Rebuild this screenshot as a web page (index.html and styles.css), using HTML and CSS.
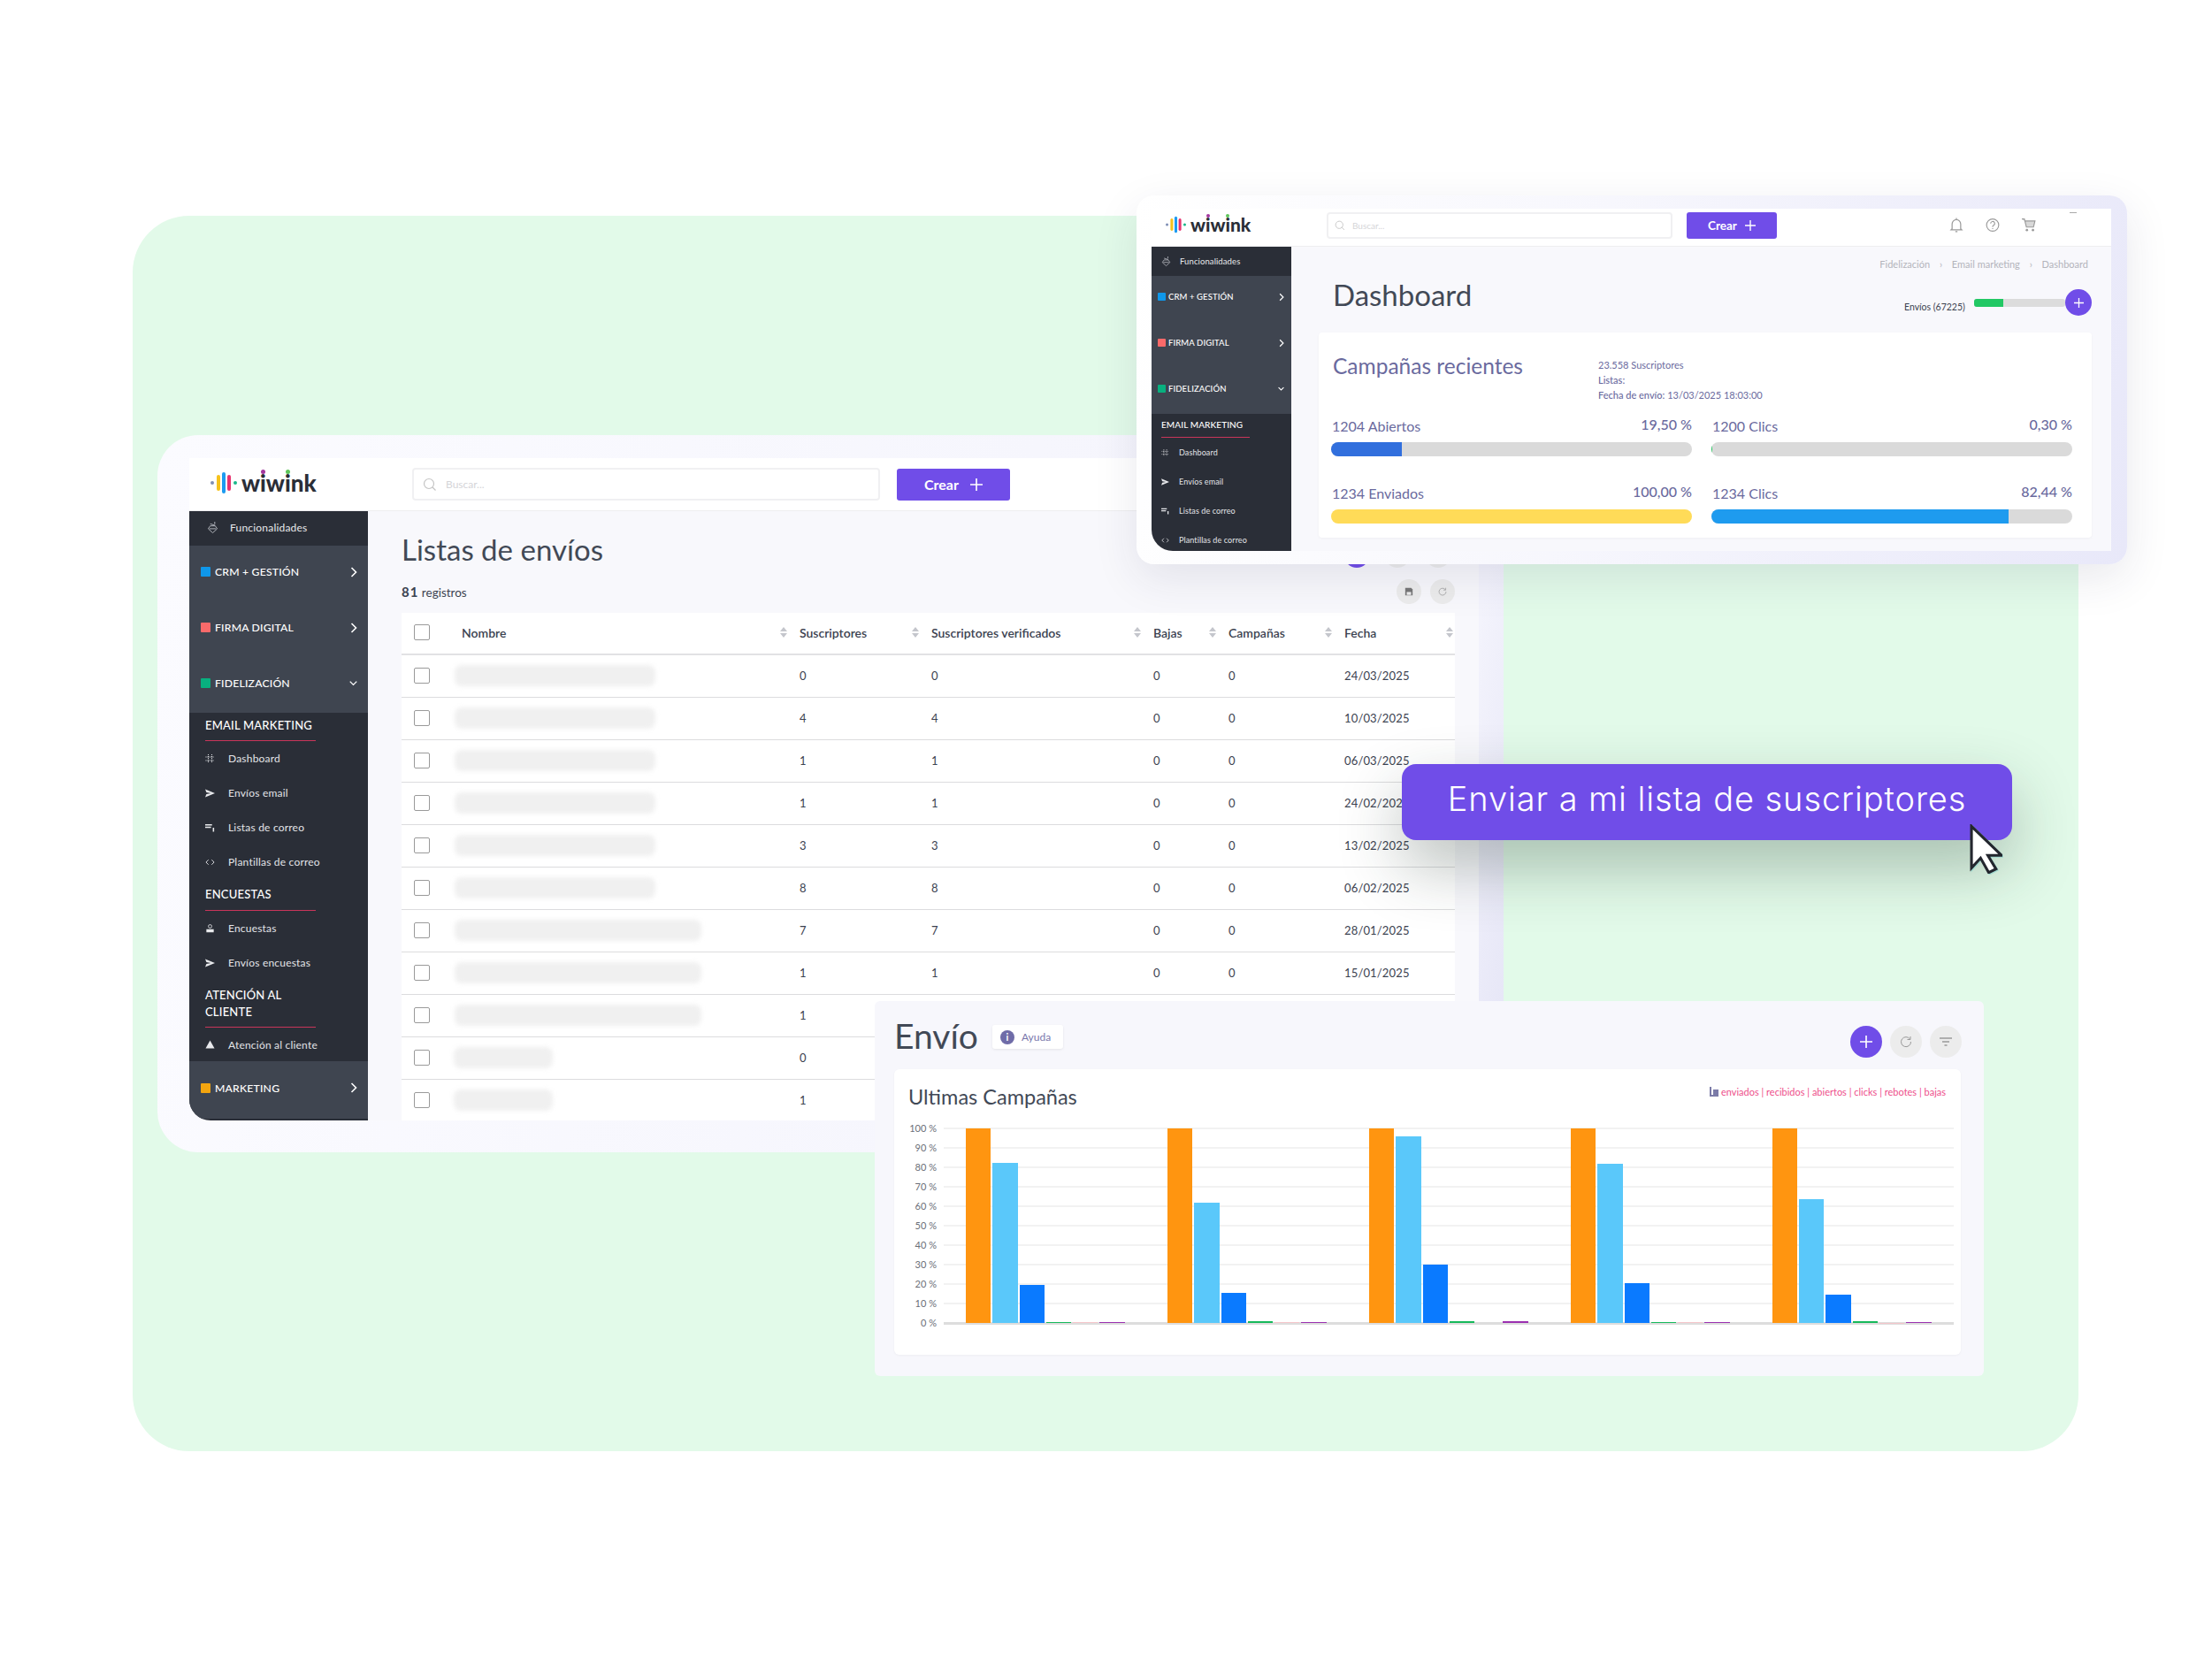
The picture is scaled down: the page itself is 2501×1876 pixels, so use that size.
FILE: index.html
```html
<!DOCTYPE html>
<html lang="es">
<head>
    <meta charset="UTF-8">
    <title>Wiwink</title>
    <link rel="stylesheet" href="styles.css">
</head>
<body>
    <svg class="sprite" width="0" height="0">
        <symbol id="i-bars" viewBox="0 0 30 24">
            <circle cx="2" cy="12" r="2" fill="#7f8fb5"/>
            <rect x="7" y="3" width="4" height="18" rx="2" fill="#f6c21c"/>
            <rect x="13" y="0" width="4" height="24" rx="2" fill="#1d9bf0"/>
            <rect x="19" y="3" width="4" height="18" rx="2" fill="#e8326f"/>
            <circle cx="28" cy="12" r="2" fill="#19b789"/>
        </symbol>
        <symbol id="i-search" viewBox="0 0 16 16">
            <circle cx="7" cy="7" r="5.5" fill="none" stroke="#c4c4c4" stroke-width="1.2"/>
            <path d="M11 11l3.5 3.5" stroke="#c4c4c4" stroke-width="1.2"/>
        </symbol>
        <symbol id="i-plus" viewBox="0 0 12 12">
            <path d="M6 0v12M0 6h12" stroke="currentColor" stroke-width="1.4" fill="none"/>
        </symbol>
        <symbol id="i-right" viewBox="0 0 8 12">
            <path d="M1.5 1l5 5-5 5" stroke="currentColor" stroke-width="1.6" fill="none"/>
        </symbol>
        <symbol id="i-down" viewBox="0 0 12 8">
            <path d="M1 1.5l5 5 5-5" stroke="currentColor" stroke-width="1.8" fill="none"/>
        </symbol>
        <symbol id="i-func" viewBox="0 0 14 16">
            <path d="M7 14.5L1.5 9.5 4 6h6l2.500 3.500zM3 9.5h8M4 3.5l6 2M9.500 1v3" stroke="currentColor" fill="none"/>
        </symbol>
        <symbol id="i-dash" viewBox="0 0 10 10">
            <path d="M3 0v10M7 0v10M0 3h10M0 7h10" stroke="currentColor" stroke-dasharray="1 1" fill="none"/>
        </symbol>
        <symbol id="i-send" viewBox="0 0 12 10">
            <path d="M0 0l12 5-12 5 1.500-4L7 5 1.500 4z" fill="currentColor"/>
        </symbol>
        <symbol id="i-list" viewBox="0 0 10 8">
            <path d="M0 1h7M0 3.500h6M8.500 4v4" stroke="currentColor" stroke-width="1.4" fill="none"/>
        </symbol>
        <symbol id="i-code" viewBox="0 0 12 8">
            <path d="M4 1L1 4l3 3M8 1l3 3-3 3" stroke="currentColor" fill="none"/>
        </symbol>
        <symbol id="i-poll" viewBox="0 0 12 12">
            <circle cx="6" cy="3" r="2.300" fill="none" stroke="currentColor"/>
            <path d="M1 7h10v4H1z" fill="currentColor"/>
        </symbol>
        <symbol id="i-help" viewBox="0 0 12 10">
            <path d="M6 0l5.500 10H.5z" fill="currentColor"/>
        </symbol>
        <symbol id="i-sort" viewBox="0 0 8 12">
            <path d="M4 0l4 5H0zM4 12l4-5H0z" fill="#c4c6cc"/>
        </symbol>
        <symbol id="i-save" viewBox="0 0 12 12">
            <path d="M1 1h8l2 2v8H1z" fill="#777"/>
            <rect x="3" y="6.500" width="6" height="4" fill="#eee"/>
        </symbol>
        <symbol id="i-refresh" viewBox="0 0 14 14">
            <path d="M11.500 4A5.500 5.500 0 1 0 12.500 7M12 1v3.500H8.500" stroke="currentColor" fill="none"/>
        </symbol>
        <symbol id="i-filter" viewBox="0 0 14 10">
            <path d="M0 1h14M3 5h8M5.500 9h3" stroke="currentColor" stroke-width="1.500" fill="none"/>
        </symbol>
        <symbol id="i-bell" viewBox="0 0 12 14">
            <path d="M2 10.500V6a4 4 0 0 1 8 0v4.500l1 1H1zM5 13h2M6 .500v1.500" stroke="#9a9a9a" fill="none"/>
        </symbol>
        <symbol id="i-quest" viewBox="0 0 14 14">
            <circle cx="7" cy="7" r="6" stroke="#9a9a9a" fill="none"/>
            <path d="M5 5.500a2 2 0 1 1 2.800 1.800C7 7.700 7 8 7 9M7 10v1" stroke="#9a9a9a" fill="none"/>
        </symbol>
        <symbol id="i-cart" viewBox="0 0 14 14">
            <path d="M0 1h2.500l2 8h7L13 3H3" stroke="#9a9a9a" fill="#d8d8d8"/>
            <circle cx="5" cy="12" r="1.200" fill="#9a9a9a"/>
            <circle cx="11" cy="12" r="1.200" fill="#9a9a9a"/>
        </symbol>
    </svg>

    <main class="stage">
        <div class="green-panel"></div>

        <!-- ventana listas de envios -->
        <section class="card-list">
            <div class="window">
                <header class="topbar">
                    <div class="logo">
                        <svg class="logo-mark"><use href="#i-bars"/></svg>
                        <span class="logo-text">w<span class="i-purple">i</span>w<span class="i-green">i</span>nk</span>
                    </div>
                    <div class="search">
                        <svg class="search-icon"><use href="#i-search"/></svg>
                        <span>Buscar...</span>
                    </div>
                    <button class="btn-crear">Crear <svg><use href="#i-plus"/></svg></button>
                </header>
                <div class="window-body">
                    <nav class="sidebar">
                        <div class="side-func"><svg class="side-icon"><use href="#i-func"/></svg>Funcionalidades</div>
                        <div class="side-groups">
                            <div class="side-group"><span class="square blue"></span>CRM + GESTIÓN<svg class="chev"><use href="#i-right"/></svg></div>
                            <div class="side-group"><span class="square red"></span>FIRMA DIGITAL<svg class="chev"><use href="#i-right"/></svg></div>
                            <div class="side-group"><span class="square green"></span>FIDELIZACIÓN<svg class="chev-down"><use href="#i-down"/></svg></div>
                        </div>
                        <div class="side-menu">
                            <div class="side-title">EMAIL MARKETING</div>
                            <div class="side-item"><svg class="item-icon"><use href="#i-dash"/></svg>Dashboard</div>
                            <div class="side-item"><svg class="item-icon"><use href="#i-send"/></svg>Envíos email</div>
                            <div class="side-item"><svg class="item-icon"><use href="#i-list"/></svg>Listas de correo</div>
                            <div class="side-item"><svg class="item-icon"><use href="#i-code"/></svg>Plantillas de correo</div>
                            <div class="side-title">ENCUESTAS</div>
                            <div class="side-item"><svg class="item-icon"><use href="#i-poll"/></svg>Encuestas</div>
                            <div class="side-item"><svg class="item-icon"><use href="#i-send"/></svg>Envíos encuestas</div>
                            <div class="side-title two-lines">ATENCIÓN AL CLIENTE</div>
                            <div class="side-item short"><svg class="item-icon"><use href="#i-help"/></svg>Atención al cliente</div>
                        </div>
                        <div class="side-group side-last"><span class="square orange"></span>MARKETING<svg class="chev"><use href="#i-right"/></svg></div>
                    </nav>
                    <div class="list-main">
                        <div class="list-head">
                            <h1 class="list-title">Listas de envíos</h1>
                            <div class="list-actions">
                                <span class="circle purple"></span>
                                <span class="circle"></span>
                                <span class="circle"></span>
                            </div>
                        </div>
                        <div class="list-meta">
                            <p><b>81</b> registros</p>
                            <div class="meta-actions">
                                <span class="circle"><svg class="mini"><use href="#i-save"/></svg></span>
                                <span class="circle"><svg class="mini gray"><use href="#i-refresh"/></svg></span>
                            </div>
                        </div>
                        <table class="list-table">
                            <colgroup>
                                <col class="c-check"><col class="c-name"><col class="c-subs"><col class="c-verif"><col class="c-bajas"><col class="c-camp"><col class="c-date">
                            </colgroup>
                            <thead>
                                <tr>
                                    <th><span class="check"></span></th>
                                    <th><div class="th-in">Nombre<svg class="sort"><use href="#i-sort"/></svg></div></th>
                                    <th><div class="th-in">Suscriptores<svg class="sort"><use href="#i-sort"/></svg></div></th>
                                    <th><div class="th-in">Suscriptores verificados<svg class="sort"><use href="#i-sort"/></svg></div></th>
                                    <th><div class="th-in">Bajas<svg class="sort"><use href="#i-sort"/></svg></div></th>
                                    <th><div class="th-in">Campañas<svg class="sort"><use href="#i-sort"/></svg></div></th>
                                    <th><div class="th-in last">Fecha<svg class="sort"><use href="#i-sort"/></svg></div></th>
                                </tr>
                            </thead>
                            <tbody>
                                <tr><td><span class="check"></span></td><td><div class="blur"></div></td><td>0</td><td>0</td><td>0</td><td>0</td><td>24/03/2025</td></tr>
                                <tr><td><span class="check"></span></td><td><div class="blur"></div></td><td>4</td><td>4</td><td>0</td><td>0</td><td>10/03/2025</td></tr>
                                <tr><td><span class="check"></span></td><td><div class="blur"></div></td><td>1</td><td>1</td><td>0</td><td>0</td><td>06/03/2025</td></tr>
                                <tr><td><span class="check"></span></td><td><div class="blur"></div></td><td>1</td><td>1</td><td>0</td><td>0</td><td>24/02/2025</td></tr>
                                <tr><td><span class="check"></span></td><td><div class="blur"></div></td><td>3</td><td>3</td><td>0</td><td>0</td><td>13/02/2025</td></tr>
                                <tr><td><span class="check"></span></td><td><div class="blur"></div></td><td>8</td><td>8</td><td>0</td><td>0</td><td>06/02/2025</td></tr>
                                <tr><td><span class="check"></span></td><td><div class="blur wide"></div></td><td>7</td><td>7</td><td>0</td><td>0</td><td>28/01/2025</td></tr>
                                <tr><td><span class="check"></span></td><td><div class="blur wide"></div></td><td>1</td><td>1</td><td>0</td><td>0</td><td>15/01/2025</td></tr>
                                <tr><td><span class="check"></span></td><td><div class="blur wide"></div></td><td>1</td><td></td><td></td><td></td><td></td></tr>
                                <tr><td><span class="check"></span></td><td><div class="blur small"></div></td><td>0</td><td></td><td></td><td></td><td></td></tr>
                                <tr><td><span class="check"></span></td><td><div class="blur small"></div></td><td>1</td><td></td><td></td><td></td><td></td></tr>
                            </tbody>
                        </table>
                    </div>
                </div>
            </div>
        </section>

        <!-- ventana dashboard -->
        <section class="card-dash">
            <div class="window mini-window">
                <header class="topbar">
                    <div class="logo">
                        <svg class="logo-mark"><use href="#i-bars"/></svg>
                        <span class="logo-text">w<span class="i-purple">i</span>w<span class="i-green">i</span>nk</span>
                    </div>
                    <div class="search">
                        <svg class="search-icon"><use href="#i-search"/></svg>
                        <span>Buscar...</span>
                    </div>
                    <button class="btn-crear">Crear <svg><use href="#i-plus"/></svg></button>
                    <div class="top-icons">
                        <svg><use href="#i-bell"/></svg>
                        <svg><use href="#i-quest"/></svg>
                        <svg><use href="#i-cart"/></svg>
                    </div>
                    <span class="avatar-edge"></span>
                </header>
                <div class="window-body">
                    <nav class="sidebar">
                        <div class="side-func"><svg class="side-icon"><use href="#i-func"/></svg>Funcionalidades</div>
                        <div class="side-groups">
                            <div class="side-group"><span class="square blue"></span>CRM + GESTIÓN<svg class="chev"><use href="#i-right"/></svg></div>
                            <div class="side-group"><span class="square red"></span>FIRMA DIGITAL<svg class="chev"><use href="#i-right"/></svg></div>
                            <div class="side-group"><span class="square green"></span>FIDELIZACIÓN<svg class="chev-down"><use href="#i-down"/></svg></div>
                        </div>
                        <div class="side-menu">
                            <div class="side-title">EMAIL MARKETING</div>
                            <div class="side-item"><svg class="item-icon"><use href="#i-dash"/></svg>Dashboard</div>
                            <div class="side-item"><svg class="item-icon"><use href="#i-send"/></svg>Envíos email</div>
                            <div class="side-item"><svg class="item-icon"><use href="#i-list"/></svg>Listas de correo</div>
                            <div class="side-item"><svg class="item-icon"><use href="#i-code"/></svg>Plantillas de correo</div>
                        </div>
                    </nav>
                    <div class="dash-main">
                        <div class="crumbs">Fidelización <i>›</i> Email marketing <i>›</i> Dashboard</div>
                        <div class="dash-head">
                            <h1 class="dash-title">Dashboard</h1>
                            <div class="usage">
                                <span class="usage-label">Envíos (67225)</span>
                                <div class="usage-bar"><div class="usage-fill"></div></div>
                                <span class="round-plus"><svg><use href="#i-plus"/></svg></span>
                            </div>
                        </div>
                        <div class="dash-card">
                            <div class="dash-card-head">
                                <h2>Campañas recientes</h2>
                                <div class="dash-info">
                                    <p>23.558 Suscriptores</p>
                                    <p><b>Listas:</b></p>
                                    <p><b>Fecha de envío:</b> 13/03/2025 18:03:00</p>
                                </div>
                            </div>
                            <div class="stats">
                                <div class="stat">
                                    <div class="stat-text"><span>1204 Abiertos</span><b>19,50 %</b></div>
                                    <div class="stat-bar"><div class="stat-fill" style="width: 19.5%; background: #316fdd"></div></div>
                                </div>
                                <div class="stat">
                                    <div class="stat-text"><span>1200 Clics</span><b>0,30 %</b></div>
                                    <div class="stat-bar"><div class="stat-fill" style="width: 0.3%; background: #22c55e"></div></div>
                                </div>
                                <div class="stat">
                                    <div class="stat-text"><span>1234 Enviados</span><b>100,00 %</b></div>
                                    <div class="stat-bar"><div class="stat-fill" style="width: 100%; background: #ffdb58"></div></div>
                                </div>
                                <div class="stat">
                                    <div class="stat-text"><span>1234 Clics</span><b>82,44 %</b></div>
                                    <div class="stat-bar"><div class="stat-fill" style="width: 82.44%; background: #1e9bef"></div></div>
                                </div>
                            </div>
                        </div>
                    </div>
                </div>
            </div>
        </section>

        <!-- panel envio -->
        <section class="panel-envio">
            <div class="envio-head">
                <h1 class="envio-title">Envío</h1>
                <div class="chip"><span class="chip-i">i</span>Ayuda</div>
                <div class="envio-actions">
                    <span class="big-circle purple"><svg><use href="#i-plus"/></svg></span>
                    <span class="big-circle"><svg><use href="#i-refresh"/></svg></span>
                    <span class="big-circle"><svg class="f"><use href="#i-filter"/></svg></span>
                </div>
            </div>
            <div class="chart-card">
                <div class="chart-head">
                    <h2>Ultimas Campañas</h2>
                    <div class="legend">
                        <span class="legend-icon"></span>
                        enviados | recibidos | abiertos | clicks | rebotes | bajas
                    </div>
                </div>
                <div class="plot">
                    <div class="grid-lines">
                        <div class="grid-row"><span>100 %</span><i></i></div>
                        <div class="grid-row"><span>90 %</span><i></i></div>
                        <div class="grid-row"><span>80 %</span><i></i></div>
                        <div class="grid-row"><span>70 %</span><i></i></div>
                        <div class="grid-row"><span>60 %</span><i></i></div>
                        <div class="grid-row"><span>50 %</span><i></i></div>
                        <div class="grid-row"><span>40 %</span><i></i></div>
                        <div class="grid-row"><span>30 %</span><i></i></div>
                        <div class="grid-row"><span>20 %</span><i></i></div>
                        <div class="grid-row"><span>10 %</span><i></i></div>
                        <div class="grid-row zero"><span>0 %</span><i></i></div>
                    </div>
                    <div class="bars">
                        <div class="bar-group">
                            <div class="bar b1" style="height: 100%"></div><div class="bar b2" style="height: 82.5%"></div><div class="bar b3" style="height: 19.5%"></div><div class="bar b4" style="height: 0.4%"></div><div class="bar b5" style="height: 0.4%"></div><div class="bar b6" style="height: 0.4%"></div>
                        </div>
                        <div class="bar-group">
                            <div class="bar b1" style="height: 100%"></div><div class="bar b2" style="height: 62%"></div><div class="bar b3" style="height: 15.5%"></div><div class="bar b4" style="height: 0.9%"></div><div class="bar b5" style="height: 0.3%"></div><div class="bar b6" style="height: 0.3%"></div>
                        </div>
                        <div class="bar-group">
                            <div class="bar b1" style="height: 100%"></div><div class="bar b2" style="height: 96%"></div><div class="bar b3" style="height: 30%"></div><div class="bar b4" style="height: 1%"></div><div class="bar b5" style="height: 0"></div><div class="bar b6" style="height: 0.9%"></div>
                        </div>
                        <div class="bar-group">
                            <div class="bar b1" style="height: 100%"></div><div class="bar b2" style="height: 82%"></div><div class="bar b3" style="height: 20.5%"></div><div class="bar b4" style="height: 0.6%"></div><div class="bar b5" style="height: 0.3%"></div><div class="bar b6" style="height: 0.5%"></div>
                        </div>
                        <div class="bar-group">
                            <div class="bar b1" style="height: 100%"></div><div class="bar b2" style="height: 63.5%"></div><div class="bar b3" style="height: 14.7%"></div><div class="bar b4" style="height: 0.8%"></div><div class="bar b5" style="height: 0.1%"></div><div class="bar b6" style="height: 0.5%"></div>
                        </div>
                    </div>
                </div>
            </div>
        </section>

        <button class="btn-enviar">Enviar a mi lista de suscriptores</button>

        <svg class="cursor" viewBox="0 0 36 54">
            <path d="M2 2v46l10-11 9 16 8-4-9-15h15z" fill="#fff" stroke="#23262e" stroke-width="3" stroke-linejoin="miter"/>
        </svg>
    </main>
</body>
</html>
```

FILE: styles.css
```css
* {
    box-sizing: border-box;
}

body {
    margin: 0;
    background-color: #fff;
    font-family: Lato, "Open Sans", sans-serif;
    color: #3b4250;
}

h1, h2, p {
    margin: 0;
    font-weight: 400;
}

.sprite {
    position: absolute;
}

/* free canvas: the windows are placed on it */
.stage {
    position: relative;
    width: 2501px;
    height: 1876px;
    overflow: hidden;
}

.green-panel {
    position: absolute;
    left: 150px;
    top: 244px;
    width: 2200px;
    height: 1397px;
    background-color: #e2fae9;
    border-radius: 64px;
}

.card-list {
    position: absolute;
    left: 178px;
    top: 492px;
    width: 1522px;
    height: 811px;
    padding: 26px 28px 36px 36px;
    border-radius: 46px;
    background: linear-gradient(100deg, #fbfbff 0%, #f6f6fd 60%, #f3f3fc 92%, #e7e7f7 98.1%);
}

.card-dash {
    position: absolute;
    left: 1285px;
    top: 221px;
    width: 1120px;
    height: 417px;
    padding: 15px 18px 15px 17px;
    border-radius: 20px;
    background: linear-gradient(100deg, #fff 0%, #f7f7fd 45%, #e8e8f9 100%);
    box-shadow: 0 16px 50px rgba(40, 40, 80, 0.1);
}

.window {
    height: 100%;
    display: flex;
    flex-direction: column;
    background-color: #f8f8fc;
    border-bottom-left-radius: 24px;
    overflow: hidden;
}

.window-body {
    flex: 1;
    display: flex;
    min-height: 0;
}

/* top bar */
.topbar {
    height: 60px;
    flex-shrink: 0;
    display: flex;
    align-items: center;
    padding-left: 24px;
    background-color: #fff;
    border-bottom: 1px solid #eeeef0;
}

.logo {
    width: 228px;
    display: flex;
    align-items: center;
    gap: 5px;
    margin-top: -3px;
}

.logo-mark {
    width: 30px;
    height: 24px;
}

.logo-text {
    font-size: 26px;
    font-weight: 900;
    line-height: 24px;
    color: #2a2e37;
}

.i-purple,
.i-green {
    position: relative;
    color: #2a2e37;
}

.i-purple::before,
.i-green::before {
    content: "";
    position: absolute;
    left: 1px;
    top: 1px;
    width: 5px;
    height: 5px;
    border-radius: 50%;
    background-color: #a3379e;
}

.i-green::before {
    background-color: #5fc65a;
}

.search {
    width: 529px;
    height: 37px;
    display: flex;
    align-items: center;
    gap: 10px;
    padding-left: 10px;
    border: 2px solid #f0f0f2;
    border-radius: 4px;
    font-size: 12px;
    color: #d5d5d8;
}

.search-icon {
    width: 16px;
    height: 16px;
}

.btn-crear {
    width: 128px;
    height: 36px;
    margin-left: 19px;
    display: flex;
    align-items: center;
    justify-content: center;
    gap: 13px;
    border: none;
    border-radius: 3px;
    background-color: #704de8;
    color: #fff;
    font-family: inherit;
    font-size: 16px;
    font-weight: 700;
}

.btn-crear svg {
    width: 14px;
    height: 14px;
}

/* sidebar */
.sidebar {
    width: 202px;
    flex-shrink: 0;
    display: flex;
    flex-direction: column;
    background-color: #2a2e37;
    color: #e8e9ec;
    font-size: 12px;
    letter-spacing: 0.2px;
}

.side-func {
    height: 39px;
    flex-shrink: 0;
    display: flex;
    align-items: center;
    padding: 0 0 2px 20px;
    gap: 13px;
}

.side-icon {
    width: 13px;
    height: 15px;
    color: #b9bcc2;
}

.side-groups {
    height: 188px;
    flex-shrink: 0;
    background-color: #3f4550;
}

.side-group {
    height: 63px;
    flex-shrink: 0;
    padding: 0 12px 4px 13px;
    display: flex;
    align-items: center;
    background-color: #3f4550;
    font-size: 12.2px;
    font-weight: 500;
    color: #fff;
}

.side-last {
    height: 65px;
    padding-bottom: 5px;
}

.square {
    width: 11px;
    height: 11px;
    margin-right: 5px;
    border-radius: 1px;
}

.blue { background-color: #0f97ea; }
.red { background-color: #f96a6a; }
.green { background-color: #08b07f; }
.orange { background-color: #f3a50f; }

.chev,
.chev-down {
    margin-left: auto;
    color: #fff;
}

.chev {
    width: 8px;
    height: 12px;
}

.chev-down {
    width: 9px;
    height: 7px;
}

.side-menu {
    flex-shrink: 0;
    padding: 0 0 0 18px;
}

.side-title {
    width: 125px;
    height: 33px;
    display: flex;
    align-items: center;
    padding-bottom: 2px;
    border-bottom: 1px solid #c9355a;
    font-size: 13px;
    font-weight: 500;
    color: #fff;
}

.side-item + .side-title {
    height: 36px;
}

.side-item + .side-title.two-lines {
    height: 54px;
    line-height: 19px;
    padding: 1px 0 0;
}

.side-item {
    height: 39px;
    display: flex;
    align-items: center;
    gap: 15px;
    color: #e3e4e8;
}

.side-item.short {
    height: 38px;
}

.item-icon {
    width: 11px;
    height: 10px;
    flex-shrink: 0;
    color: #e8e9ec;
}

/* list page */
.list-main {
    flex: 1;
    min-width: 0;
    padding: 23px 27px 0 38px;
}

.list-head {
    height: 40px;
    display: flex;
    justify-content: space-between;
    align-items: flex-end;
}

.list-title {
    font-size: 33px;
    line-height: 40px;
    color: #424956;
}

.list-actions {
    display: flex;
    gap: 18px;
    padding-right: 5px;
    margin-bottom: -1px;
}

.circle {
    width: 28px;
    height: 28px;
    display: flex;
    align-items: center;
    justify-content: center;
    border-radius: 50%;
    background-color: #ececec;
}

.circle.purple {
    background-color: #704de8;
}

.list-meta {
    height: 34px;
    margin-top: 11px;
    margin-bottom: 7px;
    display: flex;
    justify-content: space-between;
    align-items: center;
    font-size: 13.5px;
}

.list-meta b {
    font-size: 15px;
    font-weight: 700;
    letter-spacing: 1px;
}

.meta-actions {
    display: flex;
    gap: 10px;
}

.mini {
    width: 10px;
    height: 10px;
}

.mini.gray {
    color: #999;
}

.list-table {
    width: 1191px;
    table-layout: fixed;
    border-collapse: collapse;
    background-color: #fff;
    font-size: 13px;
    letter-spacing: 0.15px;
}

.c-check { width: 68px; }
.c-name { width: 382px; }
.c-subs { width: 149px; }
.c-verif { width: 251px; }
.c-bajas { width: 85px; }
.c-camp { width: 131px; }
.c-date { width: 125px; }

.list-table th {
    height: 47px;
    padding: 0 0 2px;
    text-align: left;
    font-size: 14px;
    font-weight: 600;
    letter-spacing: 0;
    border-bottom: 2px solid #e2e2e4;
}

.list-table td {
    height: 48px;
    padding: 0;
    border-bottom: 1px solid #dcdcde;
}

.list-table th:first-child,
.list-table td:first-child {
    padding-left: 14px;
}

.th-in {
    display: flex;
    align-items: center;
    justify-content: space-between;
    padding-right: 14px;
}

.th-in.last {
    padding-right: 2px;
}

.sort {
    width: 8px;
    height: 12px;
}

.check {
    display: block;
    width: 18px;
    height: 18px;
    background-color: #fff;
    border: 1.5px solid #9a9a9a;
    border-radius: 2px;
}

.blur {
    width: 227px;
    height: 24px;
    margin-left: -8px;
    border-radius: 8px;
    background-color: #f0f0f0;
    filter: blur(2.5px);
}

.blur.wide {
    width: 279px;
}

.blur.small {
    width: 112px;
    margin-left: -9px;
}

/* dashboard window */
.mini-window .topbar {
    height: 43px;
    padding: 0 0 5px 16px;
}

.mini-window .logo {
    width: 182px;
    gap: 5px;
    margin-top: -2px;
}

.mini-window .logo-mark {
    width: 23px;
    height: 20px;
}

.mini-window .logo-text {
    font-size: 21px;
    line-height: 20px;
}

.mini-window .i-purple::before,
.mini-window .i-green::before {
    width: 4px;
    height: 4px;
}

.mini-window .search {
    width: 391px;
    height: 30px;
    padding-left: 7px;
    gap: 8px;
    font-size: 10px;
}

.mini-window .search-icon {
    width: 12px;
    height: 14px;
}

.mini-window .btn-crear {
    width: 102px;
    height: 30px;
    margin-left: 16px;
    gap: 9px;
    font-size: 13.5px;
}

.mini-window .btn-crear svg {
    width: 12px;
    height: 12px;
}

.top-icons {
    display: flex;
    gap: 25px;
    margin-left: 195px;
}

.top-icons svg {
    width: 16px;
    height: 17px;
}

.avatar-edge {
    width: 8px;
    height: 1px;
    margin: 0 0 28px 38px;
    background-color: #aaa;
}

.mini-window .sidebar {
    width: 158px;
    font-size: 9.5px;
    letter-spacing: 0.1px;
}

.mini-window .side-func {
    height: 33px;
    padding: 0 0 0 11px;
    gap: 10px;
}

.mini-window .side-icon {
    width: 11px;
    height: 13px;
}

.mini-window .side-groups {
    height: 156px;
}

.mini-window .side-group {
    height: 52px;
    padding: 0 8px 5px 7px;
    font-size: 9.5px;
}

.mini-window .square {
    width: 9px;
    height: 9px;
    margin-right: 3px;
}

.mini-window .chev {
    width: 6px;
    height: 10px;
}

.mini-window .chev-down {
    width: 7px;
    height: 5px;
}

.mini-window .side-menu {
    padding-left: 11px;
}

.mini-window .side-title {
    width: 100px;
    height: 27px;
    font-size: 10px;
    padding-bottom: 3px;
}

.mini-window .side-item {
    height: 33px;
    gap: 11px;
    font-size: 9px;
}

.mini-window .item-icon {
    width: 9px;
    height: 8px;
}

.dash-main {
    flex: 1;
    min-width: 0;
    padding: 13px 22px 0 31px;
}

.crumbs {
    height: 14px;
    padding-right: 4px;
    text-align: right;
    font-size: 11px;
    line-height: 14px;
    color: #b3b4bb;
}

.crumbs i {
    font-style: normal;
    margin: 0 8px;
}

.dash-head {
    height: 40px;
    margin-top: 7px;
    margin-bottom: 23px;
    padding-left: 16px;
    display: flex;
    justify-content: space-between;
}

.dash-title {
    font-size: 33px;
    line-height: 40px;
    color: #424956;
}

.usage {
    align-self: flex-end;
    margin-bottom: -4px;
    display: flex;
    align-items: center;
}

.usage-label {
    width: 79px;
    margin-top: 9px;
    font-size: 10.5px;
}

.usage-bar {
    width: 103px;
    height: 9px;
    background-color: #dcdcdc;
    border-radius: 3px;
    overflow: hidden;
}

.usage-fill {
    width: 33px;
    height: 100%;
    background-color: #22c864;
}

.round-plus {
    width: 30px;
    height: 30px;
    display: flex;
    align-items: center;
    justify-content: center;
    border-radius: 50%;
    background-color: #704de8;
    color: #fff;
}

.round-plus svg {
    width: 11px;
    height: 11px;
}

.dash-card {
    height: 232px;
    padding: 27px 22px 0 14px;
    background-color: #fff;
    border-radius: 4px;
    box-shadow: 0 1px 3px rgba(0, 0, 0, 0.04);
    color: #6a6a9e;
}

.dash-card-head {
    display: flex;
}

.dash-card-head h2 {
    width: 302px;
    padding-left: 2px;
    font-size: 24.5px;
    line-height: 22px;
}

.dash-info {
    padding-top: 1px;
    font-size: 11px;
    line-height: 17px;
}

.dash-info b {
    font-weight: 500;
}

.stats {
    margin-top: 17px;
    display: grid;
    grid-template-columns: 408px 408px;
    column-gap: 22px;
    row-gap: 32px;
}

.stat-text {
    height: 20px;
    padding: 0 0 0 1px;
    display: flex;
    justify-content: space-between;
    font-size: 16px;
    line-height: 20px;
}

.stat-text b {
    font-weight: 500;
    font-size: 16px;
    line-height: 16px;
}

.stat-bar {
    height: 16px;
    margin-top: 8px;
    background-color: #dadada;
    border-radius: 8px;
    overflow: hidden;
}

.stat-fill {
    height: 100%;
}

/* envio panel */
.panel-envio {
    position: absolute;
    left: 989px;
    top: 1132px;
    width: 1254px;
    height: 424px;
    padding: 0 26px 0 22px;
    background-color: #f7f7fc;
    border-radius: 6px;
}

.envio-head {
    height: 77px;
    display: flex;
    align-items: center;
}

.envio-title {
    font-size: 39px;
    line-height: 48px;
    color: #424956;
}

.chip {
    height: 27px;
    width: 80px;
    margin-left: 16px;
    margin-top: 4px;
    display: flex;
    align-items: center;
    gap: 8px;
    padding-left: 9px;
    background-color: #fff;
    border-radius: 3px;
    box-shadow: 0 1px 3px rgba(0, 0, 0, 0.08);
    font-size: 12px;
    color: #7a78ac;
}

.chip-i {
    width: 16px;
    height: 16px;
    border-radius: 50%;
    background-color: #6f6ca8;
    color: #fff;
    font-size: 11px;
    font-weight: 700;
    line-height: 16px;
    text-align: center;
}

.envio-actions {
    margin-left: auto;
    margin-top: 14px;
    display: flex;
    gap: 9px;
    transform: translateX(1px);
}

.big-circle {
    width: 36px;
    height: 36px;
    display: flex;
    align-items: center;
    justify-content: center;
    border-radius: 50%;
    background-color: #ececec;
    color: #999;
}

.big-circle.purple {
    background-color: #704de8;
    color: #fff;
}

.big-circle svg {
    width: 14px;
    height: 14px;
}

.big-circle svg.f {
    height: 10px;
}

.chart-card {
    height: 323px;
    padding-top: 20px;
    background-color: #fff;
    border-radius: 6px;
    box-shadow: 0 1px 3px rgba(0, 0, 0, 0.04);
}

.chart-head {
    height: 24px;
    margin-bottom: 23px;
    padding: 0 17px 0 16px;
    display: flex;
    justify-content: space-between;
}

.chart-head h2 {
    margin-top: -1px;
    font-size: 23.5px;
    line-height: 24px;
    color: #424956;
}

.legend {
    margin-top: -3px;
    display: flex;
    align-items: center;
    gap: 3px;
    height: 16px;
    font-size: 11px;
    color: #ee4f8b;
}

.legend-icon {
    width: 10px;
    height: 11px;
    border-left: 2px solid #7b7ba8;
    border-bottom: 2px solid #7b7ba8;
    background: linear-gradient(#fff 30%, #7b7ba8 30%) no-repeat 2px 0 / 6px 100%;
}

.plot {
    display: grid;
    padding-left: 11px;
    padding-right: 8px;
}

.grid-lines,
.bars {
    grid-area: 1 / 1;
}

.grid-row {
    height: 22px;
    display: flex;
    align-items: flex-start;
}

.grid-row span {
    width: 37px;
    margin-top: -7px;
    margin-right: 8px;
    text-align: right;
    font-size: 11px;
    line-height: 14px;
    color: #6b6f78;
    white-space: nowrap;
}

.grid-row i {
    flex: 1;
    height: 2px;
    margin-top: -1px;
    background-color: #f2f2f2;
}

.grid-row.zero {
    height: 0;
}

.grid-row.zero i {
    height: 3px;
    background-color: #dddddd;
}

.bars {
    height: 220px;
    margin-left: 70px;
    display: flex;
    align-items: flex-end;
    gap: 48.2px;
    position: relative;
}

.bar-group {
    height: 100%;
    display: flex;
    align-items: flex-end;
    gap: 2px;
}

.bar {
    width: 28.3px;
}

.b1 { background-color: #ff9510; }
.b2 { background-color: #5ac8fa; }
.b3 { background-color: #0a7aff; }
.b4 { background-color: #16b95a; }
.b5 { background-color: #f5c6cb; }
.b6 { background-color: #9b30b0; }

/* floating button and pointer */
.btn-enviar {
    position: absolute;
    left: 1585px;
    top: 864px;
    width: 690px;
    height: 86px;
    padding: 0 0 8px;
    border: none;
    border-radius: 16px;
    background-color: #704de8;
    color: #fff;
    font-family: Inter, Lato, sans-serif;
    font-size: 38px;
    font-weight: 300;
    letter-spacing: 0.9px;
    box-shadow: 0 30px 70px rgba(30, 50, 40, 0.3);
}

.cursor {
    position: absolute;
    left: 2227px;
    top: 932px;
    width: 37px;
    height: 56px;
    filter: drop-shadow(1px 1px 0 #9fd8cf);
}
```
